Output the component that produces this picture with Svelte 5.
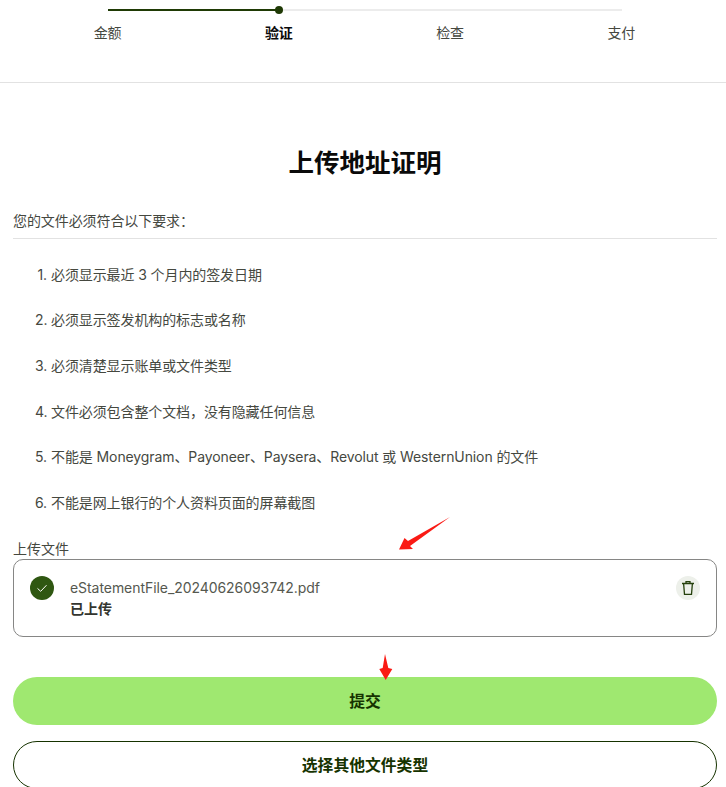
<script>
  const steps = [
    { label: '金额', active: false },
    { label: '验证', active: true },
    { label: '检查', active: false },
    { label: '支付', active: false }
  ];
  const reqs = [
    '必须显示最近 3 个月内的签发日期',
    '必须显示签发机构的标志或名称',
    '必须清楚显示账单或文件类型',
    '文件必须包含整个文档，没有隐藏任何信息',
    '不能是 Moneygram、Payoneer、Paysera、Revolut 或 WesternUnion 的文件',
    '不能是网上银行的个人资料页面的屏幕截图'
  ];
</script>

<div class="page">
  <header class="header">
    <div class="stepper">
      <div class="track"><div class="fill"><span class="dot"></span></div></div>
      <div class="steps">
        {#each steps as s}
          <span class="step" class:active={s.active}>{s.label}</span>
        {/each}
      </div>
    </div>
  </header>

  <main class="main">
    <h1>上传地址证明</h1>
    <p class="intro">您的文件必须符合以下要求：</p>
    <ol class="reqs">
      {#each reqs as r, i}
        <li><span class="num">{i + 1}.</span><span>{r}</span></li>
      {/each}
    </ol>

    <div class="label">上传文件</div>
    <div class="file">
      <span class="ok">
        <svg width="14" height="14" viewBox="0 0 14 14" fill="none"><path d="M2.500 7.400 5.700 10.300 11.500 4.200" stroke="#fff" stroke-width="1"/></svg>
      </span>
      <div class="meta">
        <div class="name">eStatementFile_20240626093742.pdf</div>
        <div class="status">已上传</div>
      </div>
      <button class="trash" aria-label="删除">
        <svg width="14" height="16" viewBox="0 0 14 16" fill="none" stroke="#25400c" stroke-width="1.3"><path d="M1 3.500h12M5 3.300V1.600h4v1.700M2.600 3.500l.9 10.900h7l.9-10.900"/></svg>
      </button>
    </div>

    <button class="btn primary">提交</button>
    <button class="btn secondary">选择其他文件类型</button>
  </main>

  <svg class="arrow a1" width="54" height="38" viewBox="0 0 54 38"><path d="M2 33.500 7.500 22 11 25 53 1 13 30 16 33Z" fill="#fa1a14"/></svg>
  <svg class="arrow a2" width="14" height="27" viewBox="0 0 14 27"><path d="M6 1 9.300 15 13.300 16 6.700 27 .3 16 3.700 15Z" fill="#fa1a14"/></svg>
</div>

<style>
  :global(body) { margin: 0; background: #fff; }
  .page {
    position: relative;
    width: 726px;
    height: 787px;
    overflow: hidden;
    font-family: Inter, "Noto Sans CJK SC", sans-serif;
    color: #45483f;
    font-size: 14px;
  }
  .header {
    height: 82px;
    border-bottom: 1px solid #e2e2e2;
    padding-left: 22px;
  }
  .stepper { width: 685px; padding-top: 9px; }
  .track {
    height: 2px;
    margin: 0 85px 0 86px;
    background: #ececec;
  }
  .fill {
    position: relative;
    width: 171px;
    height: 2px;
    background: #1f3a05;
  }
  .dot {
    position: absolute;
    right: -4px;
    top: -3px;
    width: 8px;
    height: 8px;
    border-radius: 50%;
    background: #1f3a05;
  }
  .steps {
    display: grid;
    grid-template-columns: repeat(4, 1fr);
    margin-top: 12px;
    line-height: 20px;
    text-align: center;
  }
  .step.active { font-weight: 700; color: #0a0a0a; }

  .main { padding: 0 9px 0 13px; }
  h1 {
    margin: 63px 0 0;
    font-size: 25.500px;
    line-height: 34px;
    font-weight: 700;
    text-align: center;
    color: #0a0a0a;
  }
  .intro {
    margin: 31px 0 0;
    line-height: 20px;
    padding-bottom: 7px;
    border-bottom: 1px solid #e2e2e2;
    letter-spacing: -0.08px;
  }
  .reqs {
    list-style: none;
    margin: 25.800px 0 0;
    padding: 0 0 0 22px;
    display: flex;
    flex-direction: column;
    gap: 25.600px;
    letter-spacing: -0.1px;
  }
  .reqs li { line-height: 20px; display: flex; }
  .num { width: 12px; flex: none; margin-right: 4px; text-align: right; }
  .label { margin-top: 26px; line-height: 20px; }
  .file {
    display: flex;
    align-items: flex-start;
    height: 76px;
    border: 1px solid #868685;
    border-radius: 10px;
  }
  .ok {
    flex: none;
    width: 24px;
    height: 24px;
    margin: 16px 0 0 16px;
    border-radius: 50%;
    background: #2f5711;
    display: flex;
    align-items: center;
    justify-content: center;
  }
  .meta { flex: 1; margin: 17px 0 0 16px; line-height: 21px; }
  .name { color: #55584f; letter-spacing: -0.06px; }
  .status { font-weight: 700; color: #33352f; }
  .trash {
    flex: none;
    width: 24px;
    height: 24px;
    margin: 16px 16px 0 0;
    padding: 0;
    border: 0;
    border-radius: 50%;
    background: #edf0ea;
    display: flex;
    align-items: center;
    justify-content: center;
  }
  .btn {
    display: block;
    width: 100%;
    height: 48px;
    border-radius: 24px;
    font-family: inherit;
    font-size: 15.800px;
    font-weight: 700;
    color: #163300;
  }
  .primary { margin-top: 40px; border: 0; background: #9fe870; }
  .secondary { margin-top: 16px; border: 1px solid #163300; background: #fff; }
  .arrow { position: absolute; }
  .a1 { left: 397px; top: 516px; }
  .a2 { left: 379px; top: 653px; }
</style>
